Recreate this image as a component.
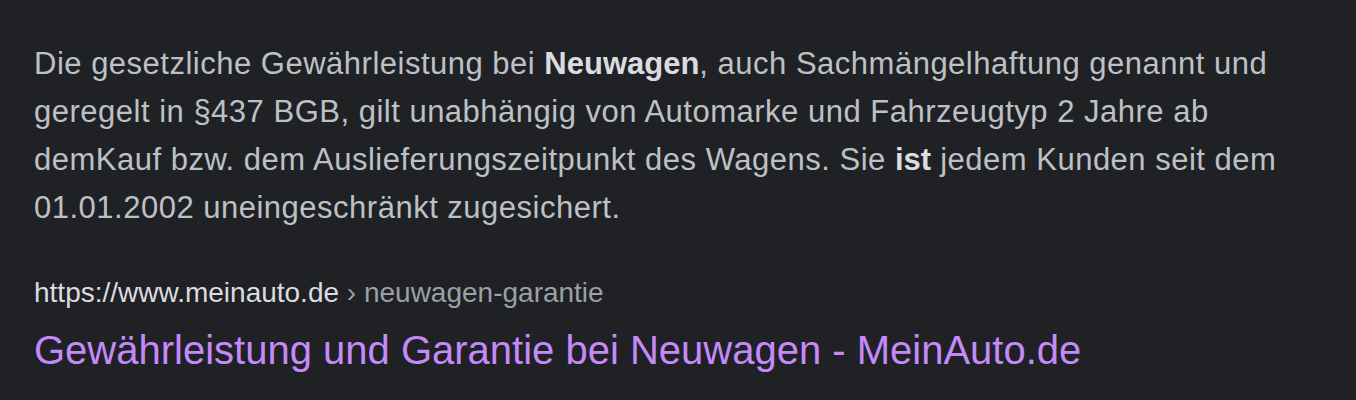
export default function App() {
  return (
    <div className="min-h-[400px] w-full bg-[#202124] px-[34px] pt-[40px] font-['Liberation_Sans',Arial,sans-serif]">
      <p className="w-[1270px] text-[31px] leading-[48px] tracking-[0.5px] text-[#bdc1c6]">
        Die gesetzliche Gewährleistung bei <b className="font-bold tracking-normal text-[#dadce0]">Neuwagen</b>, auch Sachmängelhaftung genannt und
        geregelt in §437 BGB, gilt unabhängig von Automarke und Fahrzeugtyp 2 Jahre ab demKauf bzw. dem
        Auslieferungszeitpunkt des Wagens. Sie <b className="font-bold tracking-normal text-[#dadce0]">ist</b> jedem Kunden seit dem 01.01.2002
        uneingeschränkt zugesichert.
      </p>

      <div className="mt-[43px] text-[28px] leading-[36px]">
        <span className="text-[#dadce0]">https://www.meinauto.de</span>
        <span className="text-[#9aa0a6]"> › neuwagen-garantie</span>
      </div>
      <a href="#" className="mt-[15px] block text-[40px] leading-[48px] text-[#c58af9]">
        Gewährleistung und Garantie bei Neuwagen - MeinAuto.de
      </a>
    </div>
  );
}
